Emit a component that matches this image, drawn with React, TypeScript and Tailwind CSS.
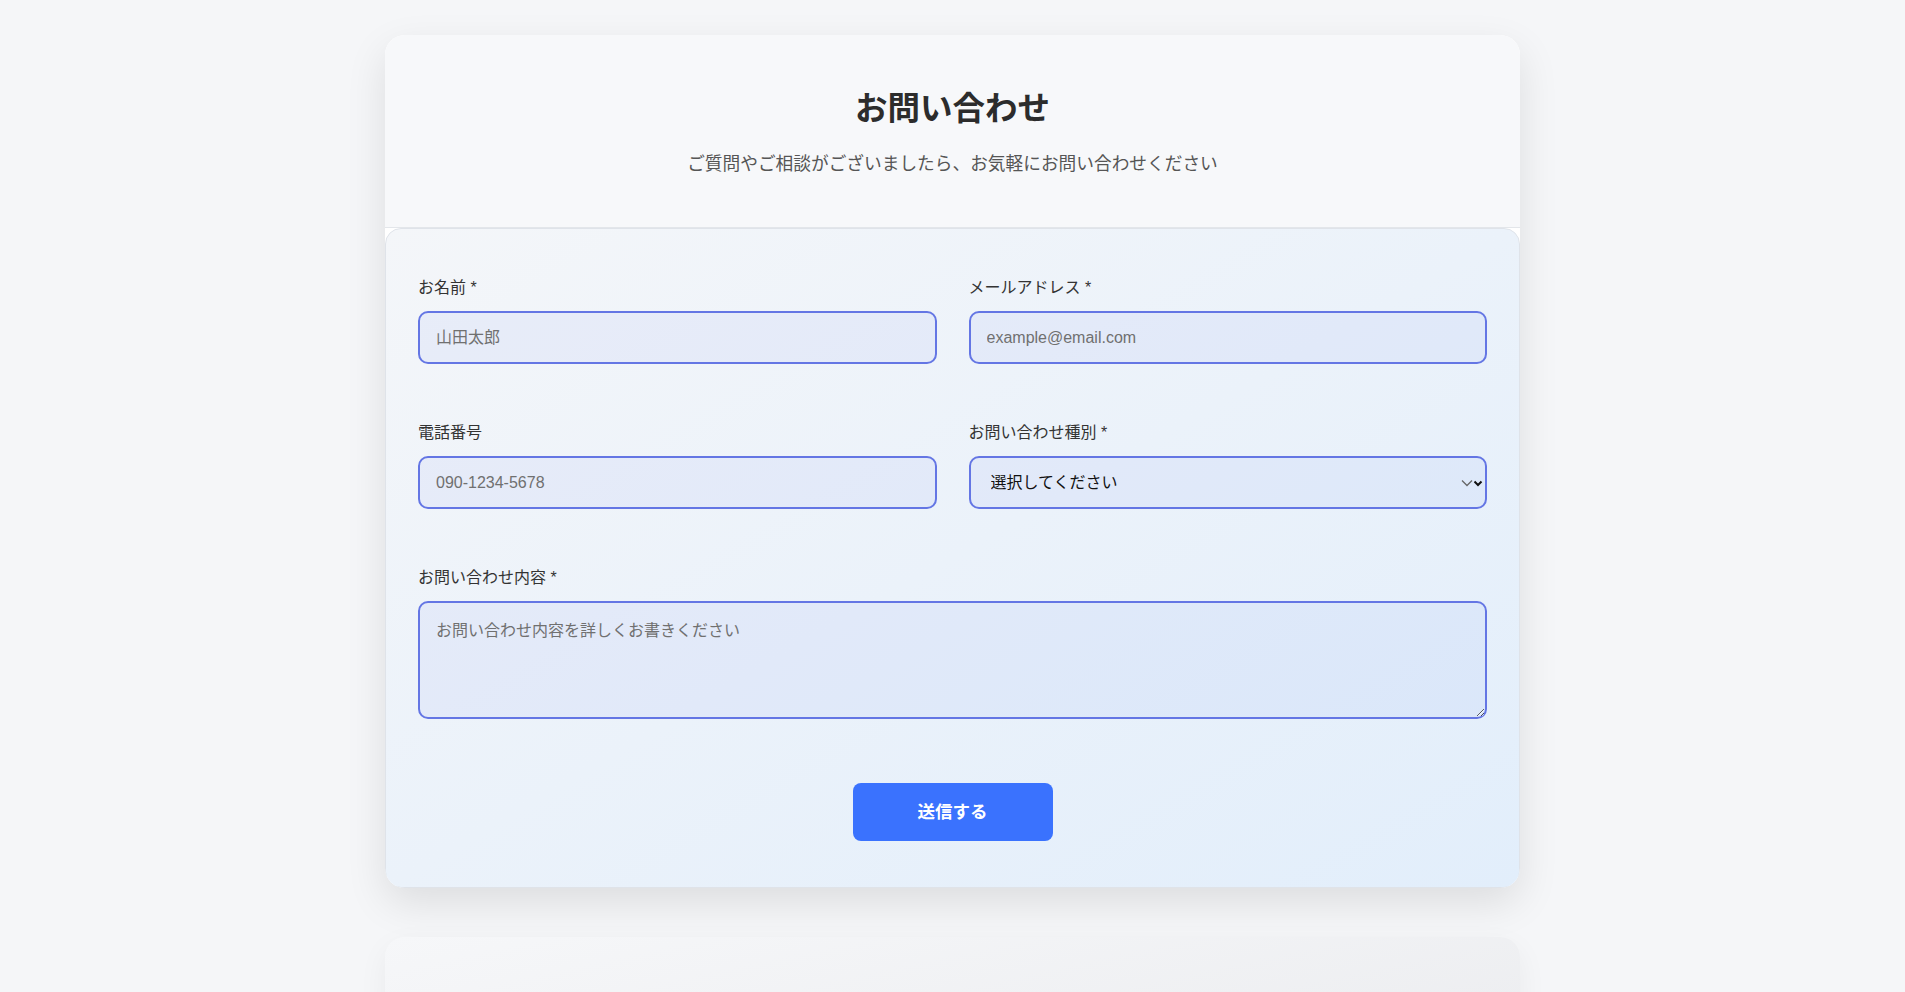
import React from "react";

const font = {
  fontFamily: '"Liberation Sans", "Noto Sans CJK JP", sans-serif',
};

function Label({ children }: { children: React.ReactNode }) {
  return (
    <label className="block text-[16px] leading-[24px] text-[#333] font-normal mb-[11px]">
      {children}
    </label>
  );
}

const inputCls =
  "block w-full h-[53px] rounded-[10px] border-2 border-[#6476e4] bg-[rgba(102,126,234,0.07)] px-[16px] text-[16px] text-[#111] placeholder:text-[#707070] outline-none";

export default function App() {
  return (
    <div
      className="min-h-screen bg-[#f5f6f8] pt-[35px] pb-[60px] flex flex-col items-center gap-[49px]"
      style={font}
    >
      <div className="w-[1135px] rounded-[20px] bg-white overflow-hidden shadow-[0_15px_40px_rgba(0,0,0,0.1)]">
        <div className="bg-[#f7f8fa] pt-[55px] pb-[49px] border-b border-[#e3e6ea] text-center">
          <h1 className="text-[32.5px] leading-[38px] font-bold text-[#2c2c2c]">お問い合わせ</h1>
          <p className="mt-[22px] text-[17.7px] leading-[28px] text-[#555]">
            ご質問やご相談がございましたら、お気軽にお問い合わせください
          </p>
        </div>
        <form
          className="rounded-[16px] border border-[#dfe3e9] bg-gradient-to-br from-[#f4f6f9] to-[#e2eefb] px-[32px] pt-[47px] pb-[46px]"
          onSubmit={(e) => e.preventDefault()}
        >
          <div className="grid grid-cols-2 gap-x-[32px] gap-y-[57px]">
            <div>
              <Label>お名前 *</Label>
              <input className={inputCls} placeholder="山田太郎" />
            </div>
            <div>
              <Label>メールアドレス *</Label>
              <input className={inputCls} placeholder="example@email.com" />
            </div>
            <div>
              <Label>電話番号</Label>
              <input className={inputCls} placeholder="090-1234-5678" />
            </div>
            <div>
              <Label>お問い合わせ種別 *</Label>
              <div className="relative">
                <select
                  className="block w-full h-[53px] appearance-none rounded-[10px] border-2 border-[#6476e4] bg-[rgba(102,126,234,0.07)] pl-[20px] pr-[40px] text-[16px] text-[#111] outline-none"
                  defaultValue=""
                  style={font}
                >
                  <option value="">選択してください</option>
                  <option value="1">サービスについて</option>
                  <option value="2">料金について</option>
                  <option value="3">その他</option>
                </select>
                <svg
                  className="absolute right-[14px] top-[23px] pointer-events-none"
                  width="12"
                  height="8"
                  viewBox="0 0 12 8"
                  fill="none"
                >
                  <path d="M1 1.5l5 5 5-5" stroke="#666" strokeWidth="1.3" />
                </svg>
                <svg
                  className="absolute right-[4px] top-[24px] pointer-events-none"
                  width="10"
                  height="7"
                  viewBox="0 0 10 7"
                  fill="none"
                >
                  <path d="M1.5 1.5l3.5 3.5 3.5-3.5" stroke="#111" strokeWidth="2" />
                </svg>
              </div>
            </div>
            <div className="col-span-2">
              <Label>お問い合わせ内容 *</Label>
              <textarea
                className="block w-full h-[118px] rounded-[10px] border-2 border-[#6476e4] bg-[rgba(102,126,234,0.07)] px-[16px] py-[16px] text-[16px] leading-[24px] text-[#111] placeholder:text-[#707070] outline-none"
                placeholder="お問い合わせ内容を詳しくお書きください"
                style={font}
              />
            </div>
          </div>
          <div className="mt-[64px] flex justify-center">
            <button
              type="submit"
              className="w-[200px] h-[58px] rounded-[8px] bg-[#3a72fe] text-white text-[17.5px] font-bold"
            >
              送信する
            </button>
          </div>
        </form>
      </div>
      <div className="w-[1135px] h-[240px] rounded-[20px] bg-gradient-to-br from-[#f6f7f9] to-[#e8e9ec] shadow-[0_10px_30px_rgba(0,0,0,0.05)]" />
    </div>
  );
}
